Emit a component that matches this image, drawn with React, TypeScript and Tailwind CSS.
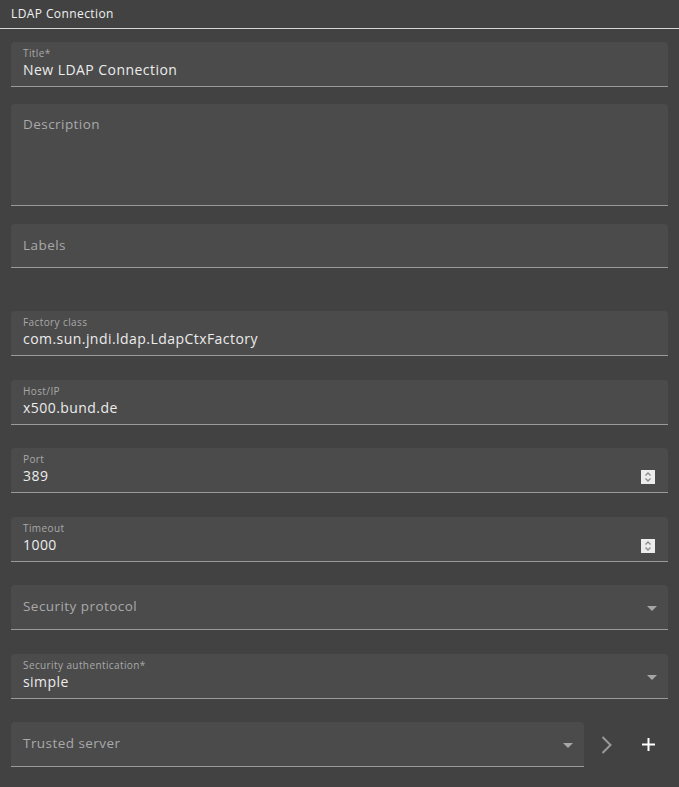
const FONT = { fontFamily: '"Open Sans", "Liberation Sans", sans-serif' }

type FieldProps = {
    label: string
    value?: string
    kind?: 'text' | 'number' | 'select'
    height?: 'tall' | 'short' | 'normal'
    className?: string
}

const HEIGHTS = {
    tall: 'h-[102px]',
    short: 'h-[44px]',
    normal: 'h-[45px]',
}

// native-looking number spinner box
const Spinner = () => (
    <div className="absolute right-[13px] top-[22px] flex h-[14px] w-[14px] items-center justify-center bg-[#ececec]">
        <svg width="8" height="12" viewBox="0 0 8 12" fill="none" stroke="#8a8a8a" strokeWidth="1.3">
            <path d="M1.5 4.5 4 2l2.5 2.5" />
            <path d="M1.5 7.5 4 10l2.5-2.5" />
        </svg>
    </div>
)

const Caret = () => (
    <svg className="absolute right-[11px] top-[21px]" width="10" height="5" viewBox="0 0 10 5">
        <path d="M0 0h10L5 5z" fill="#a6a6a6" />
    </svg>
)

const Field = ({ label, value, kind = 'text', height = 'normal', className = '' }: FieldProps) => {
    const filled = value !== undefined
    return (
        <div className={`relative rounded-t-[4px] border-b border-[#9a9a9a] bg-[#4b4b4b] ${HEIGHTS[height]} ${className}`}>
            {filled ? (
                <>
                    <div className="absolute left-[12px] top-[4px] text-[10px] leading-[14px] tracking-[0.4px] text-[#a9a9a9]">
                        {label}
                    </div>
                    <div className="absolute left-[12px] top-[18px] text-[14px] leading-[20px] tracking-[0.45px] text-[#ececec]">
                        {value}
                    </div>
                </>
            ) : (
                <div
                    className={`absolute left-[12px] text-[13.5px] leading-[20px] tracking-[0.45px] text-[#a9a9a9] ${
                        height === 'tall' ? 'top-[10px]' : 'top-[11px]'
                    }`}
                >
                    {label}
                </div>
            )}
            {kind === 'number' && <Spinner />}
            {kind === 'select' && <Caret />}
        </div>
    )
}

export default function App() {
    return (
        <div className="min-h-[787px] w-full bg-[#424242]" style={FONT}>
            {/* Header */}
            <div className="flex h-[29px] items-center border-b border-[#d6d6d6] px-[11px]">
                <span className="text-[12px] tracking-[0.4px] text-[#f0f0f0]">LDAP Connection</span>
            </div>

            <form className="flex flex-col px-[11px] pt-[13px]">
                <Field label="Title*" value="New LDAP Connection" />
                <Field label="Description" height="tall" className="mt-[17px]" />
                <Field label="Labels" height="short" className="mt-[18px]" />

                <Field label="Factory class" value="com.sun.jndi.ldap.LdapCtxFactory" className="mt-[43px]" />
                <Field label="Host/IP" value="x500.bund.de" className="mt-[24px]" />
                <Field label="Port" value="389" kind="number" className="mt-[23px]" />
                <Field label="Timeout" value="1000" kind="number" className="mt-[24px]" />
                <Field label="Security protocol" kind="select" className="mt-[23px]" />
                <Field label="Security authentication*" value="simple" kind="select" className="mt-[24px]" />

                <div className="mt-[23px] flex items-center">
                    <Field label="Trusted server" kind="select" className="w-[574px]" />
                    <button type="button" className="flex h-[42px] w-[44px] items-center justify-center">
                        <svg width="11" height="18" viewBox="0 0 11 18" fill="none" stroke="#999999" strokeWidth="2">
                            <path d="M1.5 1 9.5 9l-8 8" />
                        </svg>
                    </button>
                    <button type="button" className="flex h-[42px] w-[40px] items-center justify-center">
                        <svg width="13" height="13" viewBox="0 0 13 13" stroke="#ffffff" strokeWidth="2">
                            <path d="M6.5 0v13M0 6.5h13" />
                        </svg>
                    </button>
                </div>
            </form>
        </div>
    )
}
